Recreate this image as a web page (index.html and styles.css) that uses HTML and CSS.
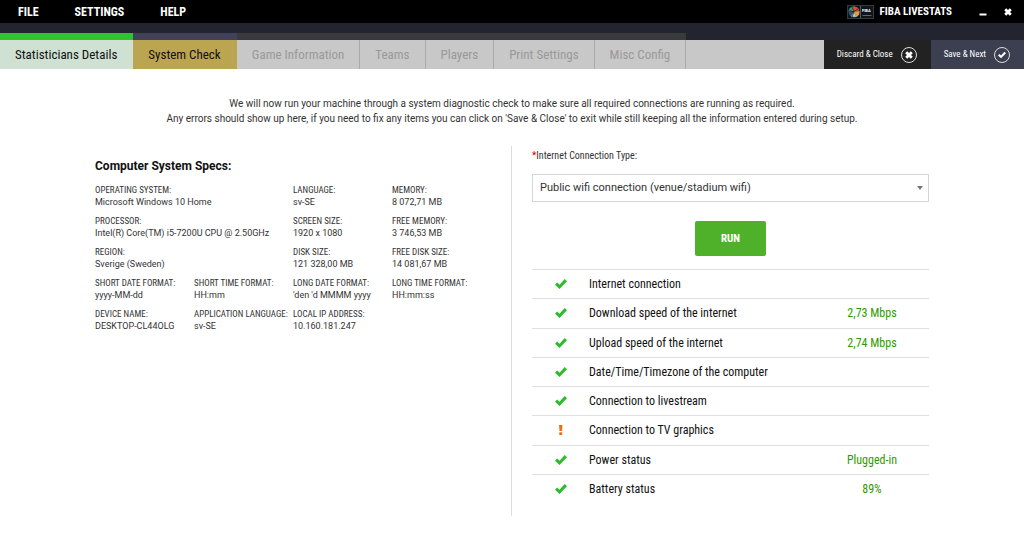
FILE: index.html
```html
<!DOCTYPE html>
<html lang="en">
<head>
<meta charset="utf-8">
<title>FIBA LiveStats</title>
<link rel="stylesheet" href="styles.css">
</head>
<body>
<svg class="symbols" aria-hidden="true">
  <symbol id="check" viewBox="0 0 12 10"><path d="M0 5.700 2.200 3.500 4.500 5.700 9.800 0 12 2.200 4.500 10Z"/></symbol>
  <symbol id="cross" viewBox="0 0 8 8"><path d="M.2 2.200 2.200.2 4 2 5.800.2 7.800 2.200 6 4 7.800 5.800 5.800 7.800 4 6 2.200 7.800.2 5.800 2 4Z"/></symbol>
</svg>
<header class="topbar">
  <nav class="menu">
    <button type="button">FILE</button>
    <button type="button">SETTINGS</button>
    <button type="button">HELP</button>
  </nav>
  <div class="brand">
    <svg class="logo" viewBox="0 0 27 14" aria-hidden="true">
      <rect x=".5" y=".5" width="26" height="13" fill="#10141b" stroke="#343a43"/>
      <path d="M13.500 1v12" stroke="#555b63"/>
      <circle cx="7" cy="7" r="5.500" fill="#334f75"/>
      <path d="M1.600 6A5.500 5.500 0 0 1 7 1.500L8 6Z" fill="#37a169"/>
      <path d="M7 1.500A5.500 5.500 0 0 1 12.200 5L8 7 5 4Z" fill="#d94b36"/>
      <path d="M12.400 6A5.500 5.500 0 0 1 9 12.100L7 7Z" fill="#e49b35"/>
      <path d="M7 7 9 12 4 11.500Z" fill="#b9d5bd"/>
      <path d="M2.500 5 6 7 11 4M5 2 7 7 5 12" fill="none" stroke="#17202b" stroke-width=".7"/>
      <path d="M15.500 10.500h9" stroke="#59677c"/>
      <text x="15" y="6.500">FIBA</text>
    </svg>
    <span class="brand-name">FIBA LIVESTATS</span>
    <button type="button" class="window-button" aria-label="Minimize"><svg viewBox="0 0 8 8"><path d="M.500 5.500h7v2h-7z"/></svg></button>
    <button type="button" class="window-button" aria-label="Close"><svg viewBox="0 0 8 8"><use href="#cross"/></svg></button>
  </div>
</header>
<div class="toolbar">
  <nav class="tabs">
    <button type="button" class="tab done">Statisticians Details</button>
    <button type="button" class="tab current">System Check</button>
    <button type="button" class="tab" disabled>Game Information</button>
    <button type="button" class="tab" disabled>Teams</button>
    <button type="button" class="tab" disabled>Players</button>
    <button type="button" class="tab" disabled>Print Settings</button>
    <button type="button" class="tab" disabled>Misc Config</button>
  </nav>
  <div class="filler"></div>
  <button type="button" class="action">Discard &amp; Close <span class="ring"><svg class="glyph"><use href="#cross"/></svg></span></button>
  <button type="button" class="action save">Save &amp; Next <span class="ring"><svg class="glyph"><use href="#check"/></svg></span></button>
</div>
<main>
  <p class="intro">We will now run your machine through a system diagnostic check to make sure all required connections are running as required.<br>Any errors should show up here, if you need to fix any items you can click on 'Save &amp; Close' to exit while still keeping all the information entered during setup.</p>
  <div class="columns">
    <section class="specs">
      <h1>Computer System Specs:</h1>
      <dl>
        <div class="wide"><dt>OPERATING SYSTEM:</dt><dd>Microsoft Windows 10 Home</dd></div>
        <div><dt>LANGUAGE:</dt><dd>sv-SE</dd></div>
        <div><dt>MEMORY:</dt><dd>8 072,71 MB</dd></div>
        <div class="wide"><dt>PROCESSOR:</dt><dd>Intel(R) Core(TM) i5-7200U CPU @ 2.50GHz</dd></div>
        <div><dt>SCREEN SIZE:</dt><dd>1920 x 1080</dd></div>
        <div><dt>FREE MEMORY:</dt><dd>3 746,53 MB</dd></div>
        <div class="wide"><dt>REGION:</dt><dd>Sverige (Sweden)</dd></div>
        <div><dt>DISK SIZE:</dt><dd>121 328,00 MB</dd></div>
        <div><dt>FREE DISK SIZE:</dt><dd>14 081,67 MB</dd></div>
        <div><dt>SHORT DATE FORMAT:</dt><dd>yyyy-MM-dd</dd></div>
        <div><dt>SHORT TIME FORMAT:</dt><dd>HH:mm</dd></div>
        <div><dt>LONG DATE FORMAT:</dt><dd>'den 'd MMMM yyyy</dd></div>
        <div><dt>LONG TIME FORMAT:</dt><dd>HH:mm:ss</dd></div>
        <div><dt>DEVICE NAME:</dt><dd>DESKTOP-CL44OLG</dd></div>
        <div><dt>APPLICATION LANGUAGE:</dt><dd>sv-SE</dd></div>
        <div><dt>LOCAL IP ADDRESS:</dt><dd>10.160.181.247</dd></div>
      </dl>
    </section>
    <section class="checks">
      <label for="connection"><span class="required">*</span>Internet Connection Type:</label>
      <div class="select-wrap">
        <select id="connection"><option>Public wifi connection (venue/stadium wifi)</option></select>
        <svg class="arrow" viewBox="0 0 6 4" aria-hidden="true"><path d="M0 0h6L3 4Z"/></svg>
      </div>
      <button type="button" class="run">RUN</button>
      <table>
        <tbody>
        <tr><td class="state"><svg role="img" aria-label="Passed"><use href="#check"/></svg></td><th scope="row">Internet connection</th><td class="value"></td></tr>
        <tr><td class="state"><svg role="img" aria-label="Passed"><use href="#check"/></svg></td><th scope="row">Download speed of the internet</th><td class="value">2,73 Mbps</td></tr>
        <tr><td class="state"><svg role="img" aria-label="Passed"><use href="#check"/></svg></td><th scope="row">Upload speed of the internet</th><td class="value">2,74 Mbps</td></tr>
        <tr><td class="state"><svg role="img" aria-label="Passed"><use href="#check"/></svg></td><th scope="row">Date/Time/Timezone of the computer</th><td class="value"></td></tr>
        <tr><td class="state"><svg role="img" aria-label="Passed"><use href="#check"/></svg></td><th scope="row">Connection to livestream</th><td class="value"></td></tr>
        <tr><td class="state warn"><svg role="img" aria-label="Warning" viewBox="0 0 12 10"><path d="M4 0h3.500L7 6H4.500ZM4.300 7.200h2.900v2.800H4.300Z"/></svg></td><th scope="row">Connection to TV graphics</th><td class="value"></td></tr>
        <tr><td class="state"><svg role="img" aria-label="Passed"><use href="#check"/></svg></td><th scope="row">Power status</th><td class="value">Plugged-in</td></tr>
        <tr><td class="state"><svg role="img" aria-label="Passed"><use href="#check"/></svg></td><th scope="row">Battery status</th><td class="value">89%</td></tr>
        </tbody>
      </table>
    </section>
  </div>
</main>
</body>
</html>
```
FILE: styles.css
```css
* { box-sizing: border-box; }
:root {
  --condensed: "Roboto Condensed", "Liberation Sans Narrow", Roboto, sans-serif;
}
body { margin: 0; background: #fff; color: #333; font: 10px/12px Roboto, sans-serif; }
button { border: 0; padding: 0; margin: 0; background: none; color: inherit; font: inherit; white-space: nowrap; }
.symbols { display: none; }

.topbar { display: flex; justify-content: space-between; height: 23px; padding: 0 12px 0 18px; background: #000; color: #fff; }
.menu { display: flex; gap: 36px; font: bold 12px/24px var(--condensed); }
.brand { display: flex; align-items: center; }
.logo { width: 27px; height: 14px; margin-right: 6px; }
.logo text { font: bold 4px Roboto, sans-serif; fill: #fff; }
.brand-name { font: bold 11px/24px var(--condensed); margin-right: 27px; }
.window-button { display: flex; }
.window-button svg { width: 8px; height: 8px; fill: #fff; }
.window-button + .window-button { margin-left: 17px; }

.toolbar { display: flex; height: 46px; padding-top: 10px; background: #22242f; }
.tabs { display: flex; }
.tab { padding: 8px 16px 0 15px; background: #c8c8c8; box-shadow: inset 0 7px #3a393b, inset -1px 0 #aaa; color: #999; font: 13px/28px var(--condensed); }
.tab.done { background: #cee1d2; box-shadow: inset 0 7px #2dc42d; color: #111; }
.tab.current { background: #bca550; box-shadow: inset 0 7px #41425a; color: #111; }
.filler { flex: 1; margin-top: 7px; background: #c8c8c8; }
.action { display: flex; align-items: center; gap: 8px; margin-top: 7px; padding: 0 14px 0 13px; background: #222; color: #fff; font: 9px/29px var(--condensed); }
.action.save { background: #3c3f50; }
.ring { display: flex; align-items: center; justify-content: center; width: 16px; height: 16px; border: 1px solid #ddd; border-radius: 50%; }
.glyph { width: 8px; height: 8px; fill: #fff; }

main { padding: 27px 95px 20px; }
.intro { margin: 0 -20px; text-align: center; font-size: 10px; line-height: 15px; }
.columns { display: grid; grid-template-columns: 1fr 1fr; margin-top: 20px; }
.specs { padding: 12px 20px 0 0; border-right: 1px solid #ddd; }
h1 { margin: 0 0 10px; color: #111; font-size: 12px; line-height: 16px; }
dl { display: grid; grid-template-columns: repeat(4, 1fr); row-gap: 7px; margin: 0; }
.wide { grid-column: span 2; }
dt { font: 9px/12px var(--condensed); white-space: nowrap; }
dd { margin: 0; font-size: 9px; line-height: 12px; white-space: nowrap; }

.checks { display: flex; flex-direction: column; padding: 3px 0 13px 20px; }
label { font: 10px/14px var(--condensed); }
.required { color: #c00; }
.select-wrap { position: relative; margin-top: 11px; }
select { display: block; width: 100%; height: 28px; padding: 0 20px 0 7px; appearance: none; border: 1px solid #d5d5d5; border-radius: 0; background: #fff; color: #333; font: 11px/26px Roboto, sans-serif; }
.arrow { position: absolute; top: 12px; right: 6px; width: 6px; height: 4px; fill: #777; }
.run { align-self: center; width: 71px; height: 35px; margin: 19px 0 13px; border-radius: 2px; background: #4fb02a; color: #fff; font: bold 11px/35px var(--condensed); }
table { width: 100%; height: 234px; border-collapse: collapse; table-layout: fixed; }
td, th { padding: 0; border-top: 1px solid #e0e0e0; text-align: left; font: 12px/20px var(--condensed); color: #111; }
.state { width: 57px; }
.state svg { display: block; width: 12px; height: 10px; margin-left: 23px; fill: #2dbb2d; }
.state.warn svg { fill: #f07010; }
td.value { width: 114px; text-align: center; color: #2f9a00; }
```
